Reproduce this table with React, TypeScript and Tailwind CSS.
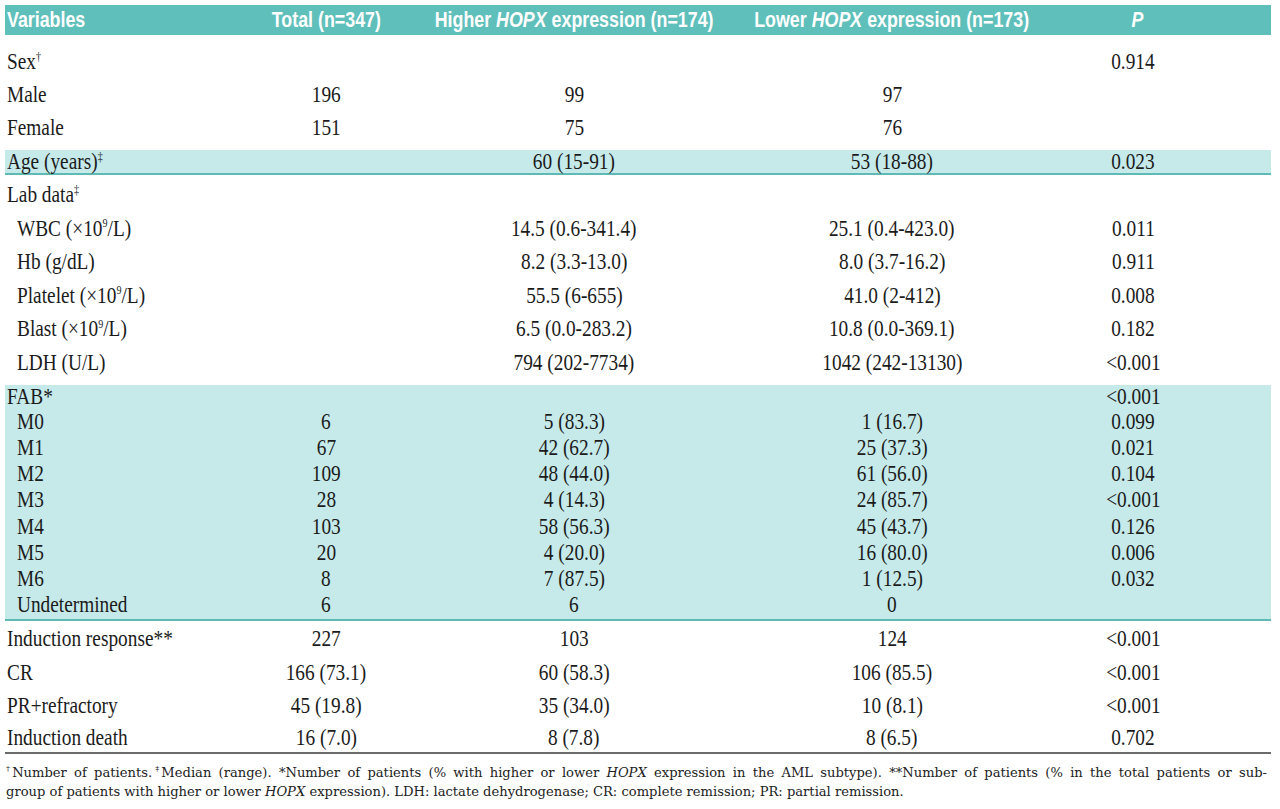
import React from "react";

const GRID = "grid grid-cols-[220px_202px_294px_342px_140px_68px]";

function T({ children, left }: { children: React.ReactNode; left?: boolean }) {
  return (
    <span
      className={
        "inline-block whitespace-nowrap scale-x-[0.84] " + (left ? "origin-left" : "origin-center")
      }
    >
      {children}
    </span>
  );
}

type RowProps = {
  label: React.ReactNode;
  indent?: boolean;
  cells?: [string?, string?, string?, string?];
  h: string;
};

function Row({ label, indent, cells = [], h }: RowProps) {
  return (
    <div className={GRID + " items-center " + h}>
      <div className={indent ? "pl-[12px]" : "pl-[2px]"}>
        <T left>{label}</T>
      </div>
      {[0, 1, 2, 3].map((i) => (
        <div key={i} className="flex justify-center">
          {cells[i] ? <T>{cells[i]}</T> : null}
        </div>
      ))}
      <div />
    </div>
  );
}

const Sup = ({ children }: { children: React.ReactNode }) => (
  <sup className="text-[12px] top-[-0.7em]">{children}</sup>
);

function HeaderCell({ children, left }: { children: React.ReactNode; left?: boolean }) {
  return (
    <div className={left ? "pl-[2px]" : "flex justify-center"}>
      <span
        className={
          "inline-block whitespace-nowrap scale-x-[0.81] " + (left ? "origin-left" : "origin-center")
        }
      >
        {children}
      </span>
    </div>
  );
}

export default function App() {
  const serif = "font-['Liberation_Serif',serif]";
  return (
    <div className="w-[1280px] h-[809px] bg-white overflow-hidden pt-[5px] pl-[5px]">
      <div className={"w-[1266px] text-[23px] leading-none text-[#1b1b1b] " + serif}>
        {/* Header */}
        <div
          className={
            GRID +
            " items-center h-[30px] bg-[#5fbfbb] text-white font-bold text-[22px] font-['Liberation_Sans',sans-serif]"
          }
        >
          <HeaderCell left>Variables</HeaderCell>
          <HeaderCell>Total (n=347)</HeaderCell>
          <HeaderCell>
            Higher <i>HOPX</i> expression (n=174)
          </HeaderCell>
          <HeaderCell>
            Lower <i>HOPX</i> expression (n=173)
          </HeaderCell>
          <div className="flex justify-center pl-[8px]">
            <span className="inline-block scale-x-[0.81]">
              <i>P</i>
            </span>
          </div>
          <div />
        </div>

        <div className="h-[10px]" />
        <Row
          h="h-[33px]"
          label={
            <>
              Sex<Sup>†</Sup>
            </>
          }
          cells={[undefined, undefined, undefined, "0.914"]}
        />
        <Row h="h-[33px]" label="Male" cells={["196", "99", "97"]} />
        <Row h="h-[33px]" label="Female" cells={["151", "75", "76"]} />
        <div className="h-[6px]" />
        <div className="bg-[#c6eaea] border-b-2 border-[#5fbab6]">
          <Row
            h="h-[23px]"
            label={
              <>
                Age (years)<Sup>‡</Sup>
              </>
            }
            cells={[undefined, "60 (15-91)", "53 (18-88)", "0.023"]}
          />
        </div>
        <div className="h-[3px]" />
        <Row
          h="h-[33.5px]"
          label={
            <>
              Lab data<Sup>‡</Sup>
            </>
          }
        />
        <Row
          h="h-[33.5px]"
          indent
          label={
            <>
              WBC (×10<Sup>9</Sup>/L)
            </>
          }
          cells={[undefined, "14.5 (0.6-341.4)", "25.1 (0.4-423.0)", "0.011"]}
        />
        <Row h="h-[33.5px]" indent label="Hb (g/dL)" cells={[undefined, "8.2 (3.3-13.0)", "8.0 (3.7-16.2)", "0.911"]} />
        <Row
          h="h-[33.5px]"
          indent
          label={
            <>
              Platelet (×10<Sup>9</Sup>/L)
            </>
          }
          cells={[undefined, "55.5 (6-655)", "41.0 (2-412)", "0.008"]}
        />
        <Row
          h="h-[33.5px]"
          indent
          label={
            <>
              Blast (×10<Sup>9</Sup>/L)
            </>
          }
          cells={[undefined, "6.5 (0.0-283.2)", "10.8 (0.0-369.1)", "0.182"]}
        />
        <Row h="h-[33.5px]" indent label="LDH (U/L)" cells={[undefined, "794 (202-7734)", "1042 (242-13130)", "<0.001"]} />
        <div className="h-[6px]" />
        <div className="bg-[#c6eaea] border-b-2 border-[#5fbab6] pb-[1px]">
          <Row h="h-[23px]" label="FAB*" cells={[undefined, undefined, undefined, "<0.001"]} />
          <Row h="h-[26.25px]" indent label="M0" cells={["6", "5 (83.3)", "1 (16.7)", "0.099"]} />
          <Row h="h-[26.25px]" indent label="M1" cells={["67", "42 (62.7)", "25 (37.3)", "0.021"]} />
          <Row h="h-[26.25px]" indent label="M2" cells={["109", "48 (44.0)", "61 (56.0)", "0.104"]} />
          <Row h="h-[26.25px]" indent label="M3" cells={["28", "4 (14.3)", "24 (85.7)", "<0.001"]} />
          <Row h="h-[26.25px]" indent label="M4" cells={["103", "58 (56.3)", "45 (43.7)", "0.126"]} />
          <Row h="h-[26.25px]" indent label="M5" cells={["20", "4 (20.0)", "16 (80.0)", "0.006"]} />
          <Row h="h-[26.25px]" indent label="M6" cells={["8", "7 (87.5)", "1 (12.5)", "0.032"]} />
          <Row h="h-[26.25px]" indent label="Undetermined" cells={["6", "6", "0"]} />
        </div>
        <div className="border-b-2 border-[#6b6b6b]">
          <Row h="h-[34px]" label="Induction response**" cells={["227", "103", "124", "<0.001"]} />
          <Row h="h-[34px]" label="CR" cells={["166 (73.1)", "60 (58.3)", "106 (85.5)", "<0.001"]} />
          <Row h="h-[33px]" label="PR+refractory" cells={["45 (19.8)", "35 (34.0)", "10 (8.1)", "<0.001"]} />
          <Row h="h-[30px]" label="Induction death" cells={["16 (7.0)", "8 (7.8)", "8 (6.5)", "0.702"]} />
        </div>
        <div className="mt-[9px] pl-[1px] w-[1262px] font-['DejaVu_Serif',serif] text-[13.1px] leading-[19px] text-[#222]">
          <div className="text-justify [text-align-last:justify]">
            <sup className="text-[8px] top-[-0.7em] mr-[-1px]">†</sup>Number of patients.<sup className="text-[8px] top-[-0.7em] mr-[-1px]">‡</sup>Median
            (range). *Number of patients (% with higher or lower <i>HOPX</i> expression in the AML subtype). **Number of
            patients (% in the total patients or sub-
          </div>
          <div>
            group of patients with higher or lower <i>HOPX</i> expression). LDH: lactate dehydrogenase; CR: complete
            remission; PR: partial remission.
          </div>
        </div>
      </div>
    </div>
  );
}
